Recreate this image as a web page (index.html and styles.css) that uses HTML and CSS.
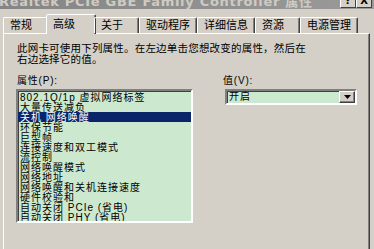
FILE: index.html
```html
<!DOCTYPE html>
<html>
<head>
  <title>Realtek PCIe GBE Family Controller 属性</title>
  <meta charset="utf-8">
  <link rel="stylesheet" href="styles.css">
</head>
<body>
  <div class="window">
    <div class="titlebar">
      <span class="title">Realtek PCIe GBE Family Controller 属性</span>
      <div class="title-btns">
        <span class="tbtn">?</span>
        <span class="tbtn">X</span>
      </div>
    </div>

    <div class="tabs">
      <div class="tab">常规</div>
      <div class="tab active">高级</div>
      <div class="tab">关于</div>
      <div class="tab">驱动程序</div>
      <div class="tab">详细信息</div>
      <div class="tab">资源</div>
      <div class="tab">电源管理</div>
    </div>

    <div class="panel">
      <p class="desc">此网卡可使用下列属性。在左边单击您想改变的属性，然后在<br>右边选择它的值。</p>

      <div class="fields">
        <div class="field">
          <label class="field-label">属性(<u>P</u>):</label>
          <ul class="listbox">
            <li>802.1Q/1p 虚拟网络标签</li>
            <li>大量传送减负</li>
            <li class="selected">关机 网络唤醒</li>
            <li>环保节能</li>
            <li>巨型帧</li>
            <li>连接速度和双工模式</li>
            <li>流控制</li>
            <li>网络唤醒模式</li>
            <li>网络地址</li>
            <li>网络唤醒和关机连接速度</li>
            <li>硬件校验和</li>
            <li>自动关闭 PCIe (省电)</li>
            <li>自动关闭 PHY (省电)</li>
          </ul>
        </div>

        <div class="field">
          <label class="field-label">值(<u>V</u>):</label>
          <div class="combo">
            <span class="combo-text">开启</span>
            <span class="combo-btn">
              <svg width="7" height="4" viewBox="0 0 7 4"><path d="M0 0h7L3.5 4z" fill="#000"/></svg>
            </span>
          </div>
        </div>
      </div>
    </div>
  </div>
</body>
</html>
```

FILE: styles.css
```css
* {
  margin: 0;
  padding: 0;
  box-sizing: border-box;
}

body {
  width: 374px;
  height: 249px;
  overflow: hidden;
  background: #d4d0c8;
  color: #000;
  font-family: "Liberation Sans", "Noto Sans CJK SC", sans-serif;
  font-size: 10px;
}

.window {
  height: 249px;
  overflow: hidden;
}

/* title bar, cut off at the top of the shot */
.titlebar {
  height: 9px;
  overflow: hidden;
  display: flex;
  align-items: flex-start;
  background: linear-gradient(90deg, #858585, #9a9a9a);
}

.title {
  margin-top: -5px;
  margin-left: -1px;
  font-family: "DejaVu Sans", "Noto Sans CJK SC", sans-serif;
  font-weight: bold;
  font-size: 13px;
  line-height: 13px;
  letter-spacing: 0.7px;
  color: #cfcbc3;
  white-space: nowrap;
}

.title-btns {
  margin-left: auto;
  margin-right: 2px;
  display: flex;
}

.tbtn {
  width: 16px;
  height: 14px;
  margin-top: -6px;
  background: #d4d0c8;
  border: 1px solid;
  border-color: #fff #404040 #404040 #fff;
  font-family: "DejaVu Sans", sans-serif;
  font-weight: bold;
  font-size: 10px;
  line-height: 12px;
  text-align: center;
}

/* tabs */
.tabs {
  display: flex;
  align-items: flex-end;
  height: 19px;
  margin-top: 5px;
  padding-left: 3px;
  position: relative;
  z-index: 1;
}

.tab {
  min-width: 45px;
  height: 16px;
  padding: 0 6px;
  border: 1px solid;
  border-bottom: none;
  border-color: #fff #404040 transparent #fff;
  border-radius: 2px 2px 0 0;
  box-shadow: inset -1px 0 #808080;
  font-size: 11px;
  line-height: 15px;
  white-space: nowrap;
}

.tab.active {
  height: 20px;
  margin: 0 -2px -1px;
  min-width: 50px;
  background: #d4d0c8;
  line-height: 18px;
}

/* page */
.panel {
  width: 367px;
  height: 230px;
  margin-left: 3px;
  padding: 9px 12px 0;
  border: 1px solid;
  border-color: #fff #404040 #404040 #fff;
  box-shadow: inset -1px 0 #808080;
}

.desc {
  margin-left: 1px;
  font-size: 10.5px;
  letter-spacing: 0.2px;
  line-height: 10.5px;
}

.fields {
  margin-top: 11px;
  display: grid;
  grid-template-columns: 177px 1fr;
  column-gap: 29px;
}

.field-label {
  display: block;
  margin-left: 1px;
  line-height: 11px;
  letter-spacing: 0.8px;
  margin-bottom: 3px;
}

.field-label u {
  text-decoration: none;
}

.listbox {
  list-style: none;
  height: 134px;
  padding-top: 1px;
  overflow: hidden;
  background: #cce8cf;
  border: 2px solid;
  border-color: #808080 #fff #fff #808080;
  box-shadow: inset 1px 1px #404040;
}

.listbox li {
  height: 10px;
  padding-left: 2px;
  line-height: 11px;
  letter-spacing: 1px;
  white-space: nowrap;
}

.listbox li.selected {
  background: #0a246a;
  color: #fff;
}

.combo {
  width: 132px;
  height: 16px;
  margin-left: 3px;
  display: flex;
  align-items: center;
  background: #cce8cf;
  border: 2px solid;
  border-color: #808080 #fff #fff #808080;
  box-shadow: inset 1px 1px #404040;
}

.combo-text {
  padding-left: 2px;
  line-height: 12px;
  letter-spacing: 1px;
}

.combo-btn {
  margin-left: auto;
  width: 16px;
  height: 12px;
  display: flex;
  align-items: center;
  justify-content: center;
  background: #d4d0c8;
  border: 1px solid;
  border-color: #fff #404040 #404040 #fff;
  box-shadow: inset -1px -1px #808080;
}
```
